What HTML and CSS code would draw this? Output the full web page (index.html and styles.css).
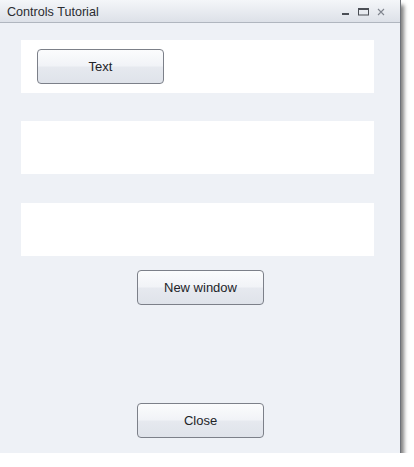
FILE: index.html
```html
<!DOCTYPE html>
<html>
<head>
<meta charset="utf-8">
<link rel="stylesheet" href="styles.css">
</head>
<body>
<div class="window">
  <div class="titlebar">
    <span class="title">Controls Tutorial</span>
    <div class="controls">
      <svg class="ctl" width="8" height="10" viewBox="0 0 8 10"><rect x="0" y="6" width="7" height="2" fill="#4a4e55"/></svg>
      <svg class="ctl" width="11" height="10" viewBox="0 0 11 10"><rect x="0.5" y="1.5" width="10" height="6.5" fill="none" stroke="#4a4e55" stroke-width="1"/><rect x="0" y="1" width="11" height="2" fill="#4a4e55"/></svg>
      <svg class="ctl" width="8" height="10" viewBox="0 0 8 10"><path d="M1 2 L7 8 M7 2 L1 8" stroke="#80858e" stroke-width="1.1" fill="none"/></svg>
    </div>
  </div>
  <div class="body">
    <div class="panel first">
      <button class="btn">Text</button>
    </div>
    <div class="panel second"></div>
    <div class="panel third"></div>
    <button class="btn centered newwin">New window</button>
    <button class="btn centered close">Close</button>
  </div>
</div>
</body>
</html>
```
FILE: styles.css
```css
html, body {
  margin: 0;
  padding: 0;
  background: #ffffff;
}
body {
  font-family: "Liberation Sans", Arial, sans-serif;
}
.window {
  width: 400px;
  height: 453px;
  background: #eef1f6;
  display: flex;
  flex-direction: column;
  box-shadow: 1px 0 0 #6d7178, 0 1px 0 #6d7178, 4px 5px 4px rgba(0,0,0,0.5);
}
.titlebar {
  height: 22px;
  border-bottom: 1px solid #b0b6bf;
  background: linear-gradient(#f4f6f9, #dde1e8);
  display: flex;
  align-items: center;
  justify-content: space-between;
  padding: 0 0 0 7px;
}
.title {
  font-size: 12.6px;
  color: #2a2c31;
  padding-top: 1px;
}
.controls {
  display: flex;
  align-items: center;
  margin-right: 15px;
  gap: 8px;
  padding-top: 1px;
}
.ctl {
  display: block;
}
.body {
  flex: 1;
  display: flex;
  flex-direction: column;
  padding-top: 17px;
  padding-bottom: 15px;
}
.panel {
  background: #ffffff;
  height: 53px;
  margin: 0 26px 0 21px;
  box-sizing: border-box;
}
.panel.first {
  padding: 9px 0 0 16px;
}
.panel.second {
  margin-top: 28px;
}
.panel.third {
  margin-top: 29px;
}
.btn {
  display: block;
  width: 127px;
  height: 35px;
  border: 1px solid #7c8089;
  border-radius: 4px;
  background: linear-gradient(#fbfcfd 0%, #f1f3f7 48%, #e6e9ef 52%, #dfe3ea 100%);
  font-family: "Liberation Sans", Arial, sans-serif;
  font-size: 13px;
  color: #222428;
  padding: 0;
  box-sizing: border-box;
}
.centered {
  align-self: center;
}
.newwin {
  margin-top: 14px;
  margin-left: 1px;
}
.close {
  margin-top: auto;
  margin-left: 1px;
}
```
